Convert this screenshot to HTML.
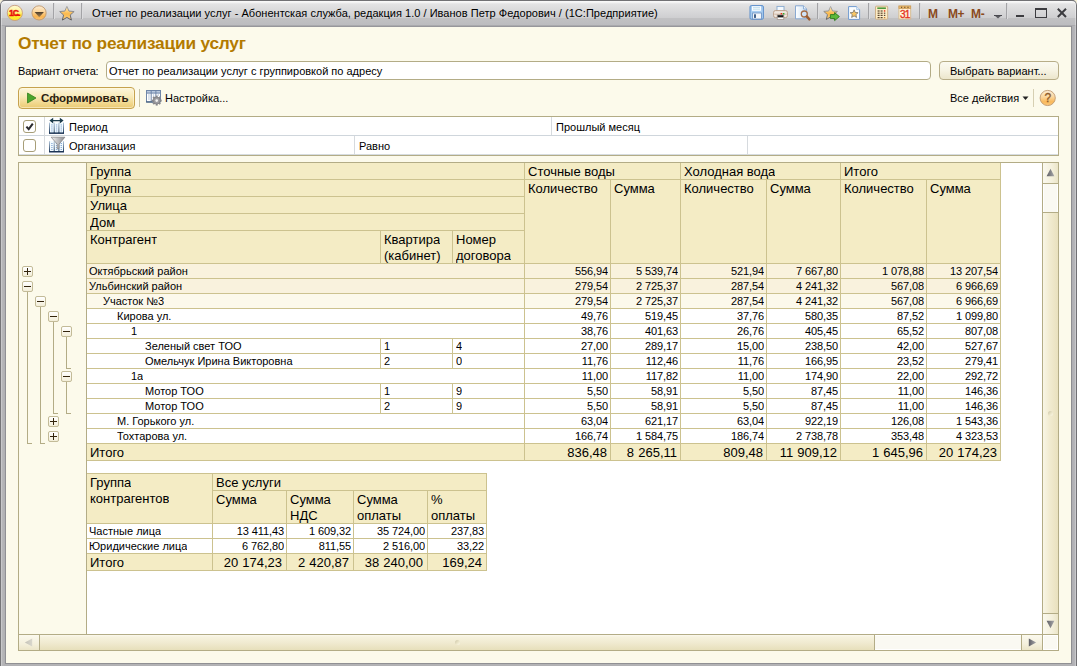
<!DOCTYPE html><html lang="ru"><head><meta charset="utf-8"><title>Отчет по реализации услуг</title><style>
html,body{margin:0;padding:0;}
body{width:1077px;height:666px;overflow:hidden;background:#f5efd5;position:relative;font-family:"Liberation Sans",sans-serif;font-size:11px;color:#000;}
div,span{box-sizing:border-box;}
.abs{position:absolute;}
#win{position:absolute;left:0;top:0;width:1077px;height:666px;border-radius:5px 5px 0 0;background:#b2b2b5;overflow:hidden;}
#tedge{position:absolute;left:0;top:0;width:1077px;height:27px;border-radius:5px 5px 0 0;border:1px solid #727275;border-bottom:none;}
#tbar{position:absolute;left:0;top:0;width:1077px;height:27px;background:linear-gradient(to bottom,#727275 0px,#727275 1px,#fbfbfb 1px,#f3f3f3 2.5px,#e3e3e4 4px,#cfcfd1 17.5px,#c1c1c3 18.5px,#bcbcbf 25px,#97979b 26px,#97979b 27px);}
#lfr{position:absolute;left:0;top:26px;width:6px;height:640px;background:linear-gradient(to right,#767678 0px,#767678 1px,#c8c8ca 1px,#c8c8ca 2px,#b8b8ba 2px,#b0b0b3 5px,#909094 5px,#909094 6px);}
#rfr{position:absolute;left:1071px;top:26px;width:6px;height:640px;background:linear-gradient(to right,#8e8e92 0px,#8e8e92 1px,#aeaeb2 1px,#b6b6ba 4px,#c8c8ca 4px,#c8c8ca 5px,#707074 5px,#707074 6px);}
#bfr{position:absolute;left:5px;top:663px;width:1067px;height:3px;background:linear-gradient(to bottom,#909094 0px,#909094 1px,#b4b4b6 1px,#b0b0b3 3px);}
#content{position:absolute;left:6px;top:27px;width:1065px;height:636px;background:#fcfaeb;}
.tsep{position:absolute;top:3px;width:2px;height:16px;background:linear-gradient(to right,#a3a3a6 0,#a3a3a6 1px,#dcdcde 1px,#dcdcde 2px);}
.ttl{position:absolute;left:92px;top:5px;height:16px;line-height:16px;font-size:11px;white-space:nowrap;color:#000;letter-spacing:0.03px;}
.h1{position:absolute;left:18px;top:32px;font-size:17.3px;font-weight:bold;color:#b37a00;line-height:22px;white-space:nowrap;letter-spacing:-0.2px;}
.ui{position:absolute;font-size:11px;line-height:14px;white-space:nowrap;}
.inp{position:absolute;left:106px;top:61px;width:825px;height:19px;border:1px solid #b3ac86;border-radius:4px;background:#fff;}
.btn{position:absolute;border:1px solid #b7ad88;border-radius:4px;background:linear-gradient(to bottom,#fbfaf1 0%,#f6f3e3 50%,#ece6cc 100%);}
.cell{position:absolute;white-space:nowrap;overflow:hidden;}
.h{font-size:13px;line-height:15px;padding-top:1px;}
.d{font-size:11px;line-height:15px;}
.num{text-align:right;letter-spacing:-0.1px;}
.h.num{letter-spacing:0;word-spacing:0.5px;}
.hl{position:absolute;height:1px;background:#ccc28f;}
.vl{position:absolute;width:1px;background:#ccc28f;}
.tb{position:absolute;width:11px;height:11px;border:1px solid #c3bb98;border-radius:2px;background:linear-gradient(to bottom,#ffffff,#f3eed8);}
.tb i{position:absolute;left:1px;top:4px;width:7px;height:1px;background:#33240c;display:block;}
.tb b{position:absolute;left:4px;top:1px;width:1px;height:7px;background:#33240c;display:block;}
.tl{position:absolute;background:#b3ac86;}
</style></head><body>
<div id="win">
<div id="tbar"></div><div id="tedge" style="box-shadow:inset 1px 0 0 rgba(255,255,255,0.35),inset -1px 0 0 rgba(255,255,255,0.35)"></div><div id="lfr"></div><div id="rfr"></div><div id="bfr"></div>
<div id="content"></div>
<svg class="abs" style="left:5px;top:3px" width="20" height="20" viewBox="0 0 20 20"><defs><linearGradient id="g1c" x1="0" y1="0" x2="0" y2="1"><stop offset="0" stop-color="#fffbd8"/><stop offset="0.45" stop-color="#fff38c"/><stop offset="0.62" stop-color="#ffee3c"/><stop offset="1" stop-color="#fde821"/></linearGradient></defs><circle cx="9.85" cy="9.9" r="7.6" fill="url(#g1c)" stroke="#c79b7e" stroke-width="0.9"/><text x="3.9" y="12.9" font-family="Liberation Sans, sans-serif" font-size="8.6" font-weight="bold" fill="#e8120c" stroke="#e8120c" stroke-width="0.45" letter-spacing="-0.9">1С</text><path d="M10.4 12.2H15.3" stroke="#e8120c" stroke-width="1.5" fill="none"/></svg>
<svg class="abs" style="left:29px;top:3px" width="20" height="20" viewBox="0 0 20 20"><defs><linearGradient id="gdd" x1="0" y1="0" x2="0" y2="1"><stop offset="0" stop-color="#fdeed6"/><stop offset="0.4" stop-color="#fbd59c"/><stop offset="0.75" stop-color="#f9b552"/><stop offset="1" stop-color="#fbc373"/></linearGradient><linearGradient id="gtr" x1="0" y1="0" x2="0" y2="1"><stop offset="0" stop-color="#4a3b2a"/><stop offset="1" stop-color="#b08a55"/></linearGradient></defs><circle cx="10.05" cy="9.9" r="7.1" fill="url(#gdd)" stroke="#c0996f" stroke-width="0.9"/><path d="M5.6 9H14.9L10.25 14.3Z" fill="url(#gtr)"/></svg>
<div class="tsep" style="left:53px"></div>
<svg class="abs" style="left:57px;top:4px" width="20" height="20" viewBox="0 0 20 20"><defs><linearGradient id="gst" x1="0" y1="0" x2="0" y2="1"><stop offset="0" stop-color="#fff0c4"/><stop offset="0.55" stop-color="#fbb94c"/><stop offset="1" stop-color="#fccf82"/></linearGradient><linearGradient id="gso" x1="0" y1="0" x2="0" y2="1"><stop offset="0" stop-color="#a9a9ab"/><stop offset="1" stop-color="#55575d"/></linearGradient></defs><path d="M9.90 2.30L11.96 7.07L17.13 7.55L13.23 10.98L14.37 16.05L9.90 13.40L5.43 16.05L6.57 10.98L2.67 7.55L7.84 7.07Z" fill="url(#gst)" stroke="url(#gso)" stroke-width="1" stroke-linejoin="round"/></svg>
<div class="tsep" style="left:81px"></div>
<div class="ttl">Отчет по реализации услуг - Абонентская служба, редакция 1.0 / Иванов Петр Федорович / (1С:Предприятие)</div>
<svg class="abs" style="left:749px;top:5px" width="16" height="16" viewBox="0 0 16 16"><rect x="1" y="0.6" width="13.4" height="13.6" rx="1.3" fill="#a9cdf0" stroke="#5d8fcb" stroke-width="1"/><rect x="3" y="1.2" width="9" height="4.6" fill="#fbfdff"/><path d="M4 2.6H11M4 4.2H11" stroke="#b5d8e8" stroke-width="0.8"/><rect x="3.6" y="8" width="8.8" height="6" fill="#f4f6f9" stroke="#6a8fc0" stroke-width="0.8"/><rect x="5" y="9.3" width="2" height="3.6" fill="#3f5f8a"/></svg>
<svg class="abs" style="left:772px;top:5px" width="17" height="16" viewBox="0 0 17 16"><rect x="5" y="1.4" width="7" height="5" fill="#f4f9fe" stroke="#86a8cf" stroke-width="0.9"/><rect x="1.6" y="5.6" width="13.8" height="7" rx="1.8" fill="#efe6de" stroke="#b89880" stroke-width="0.9"/><path d="M2.4 9.2H14.6" stroke="#c9ab94" stroke-width="0.8"/><rect x="5.2" y="10" width="6.6" height="4.6" fill="#fff" stroke="#9a8a80" stroke-width="0.7"/><rect x="5.6" y="10.2" width="5.8" height="2.2" fill="#161616"/><rect x="8.6" y="8" width="1.6" height="1.4" fill="#e8301e"/><rect x="10.8" y="8" width="1.6" height="1.4" fill="#2fae2a"/></svg>
<svg class="abs" style="left:794px;top:4px" width="18" height="18" viewBox="0 0 18 18"><defs><linearGradient id="gpg" x1="0" y1="0" x2="1" y2="0"><stop offset="0" stop-color="#ffffff"/><stop offset="1" stop-color="#c6dcf2"/></linearGradient></defs><path d="M1.5 1.8H9.5L12.6 5V14.8H1.5Z" fill="url(#gpg)" stroke="#7ea2cf" stroke-width="0.9"/><path d="M9.5 1.8V5H12.6" fill="#eef5fc" stroke="#7ea2cf" stroke-width="0.8"/><circle cx="10.3" cy="10" r="3" fill="#cfe3f8" stroke="#a36a44" stroke-width="1.3"/><path d="M12.8 12.4L15.4 15.4" stroke="#9a5b30" stroke-width="2.4" stroke-linecap="round"/></svg>
<div class="tsep" style="left:817px"></div>
<svg class="abs" style="left:822px;top:4px" width="20" height="19" viewBox="0 0 20 19"><path d="M8.60 2.40L10.54 6.93L15.45 7.38L11.74 10.62L12.83 15.42L8.60 12.90L4.37 15.42L5.46 10.62L1.75 7.38L6.66 6.93Z" fill="url(#gst)" stroke="url(#gso)" stroke-width="0.9" stroke-linejoin="round"/><path d="M8.4 10.6H12.6V8.6L17.4 12.6L12.6 16.6V14.6H8.4Z" fill="#5cb83a" stroke="#2c7a1c" stroke-width="0.9" stroke-linejoin="round"/></svg>
<svg class="abs" style="left:847px;top:5px" width="15" height="16" viewBox="0 0 15 16"><path d="M1.6 1.6H9.6L12.6 4.6V14.4H1.6Z" fill="#fbfdff" stroke="#6f9ad0" stroke-width="1"/><path d="M9.6 1.6V4.6H12.6" fill="#e4eefa" stroke="#9abbe0" stroke-width="0.7"/><path d="M7.10 4.80L8.22 7.46L11.09 7.70L8.91 9.59L9.57 12.40L7.10 10.90L4.63 12.40L5.29 9.59L3.11 7.70L5.98 7.46Z" fill="#fbc866" stroke="#77736a" stroke-width="0.8" stroke-linejoin="round"/></svg>
<div class="tsep" style="left:868px"></div>
<svg class="abs" style="left:875px;top:5px" width="14" height="16" viewBox="0 0 14 16"><rect x="0.5" y="1.2" width="12.2" height="13" rx="0.8" fill="#fdecc6" stroke="#c9ab80" stroke-width="0.9"/><rect x="2.3" y="2.4" width="8.6" height="1.6" fill="#4d9a3c"/><g fill="#5a4630"><rect x="2.6" y="5.4" width="2" height="1.2"/><rect x="5.6" y="5.4" width="2" height="1.2"/><rect x="2.6" y="7.6" width="2" height="1.2"/><rect x="5.6" y="7.6" width="2" height="1.2"/><rect x="8.9" y="7.6" width="1.4" height="1.2"/><rect x="2.6" y="9.8" width="2" height="1.2"/><rect x="5.6" y="9.8" width="2" height="1.2"/><rect x="8.9" y="9.8" width="1.4" height="1.2"/><rect x="2.6" y="12" width="2" height="1.2"/><rect x="5.6" y="12" width="2" height="1.2"/></g><rect x="8.9" y="5.2" width="1.4" height="1.5" fill="#e43a1e"/><rect x="8.9" y="12" width="1.4" height="1.2" fill="#c9862e"/></svg>
<svg class="abs" style="left:898px;top:5px" width="14" height="16" viewBox="0 0 14 16"><rect x="0.9" y="1" width="11.8" height="13" fill="#fff3dc" stroke="#d5b88c" stroke-width="0.9"/><rect x="0.9" y="1" width="11.8" height="2.6" fill="#eab96c" stroke="#c99a58" stroke-width="0.7"/><g fill="#5a4026"><rect x="3" y="1.8" width="1.2" height="1"/><rect x="6.2" y="1.8" width="1.2" height="1"/><rect x="9.4" y="1.8" width="1.2" height="1"/></g><text x="1.9" y="12.7" font-family="Liberation Sans, sans-serif" font-size="10" fill="#e4321c" stroke="#e4321c" stroke-width="0.35" letter-spacing="-0.7">31</text></svg>
<div class="tsep" style="left:919px"></div>
<div class="abs" style="left:928px;top:5px;font-size:12px;line-height:16px;font-weight:bold;color:#8a4a1c;white-space:nowrap;letter-spacing:-0.2px;transform:translateY(0.3px) scale(1,1.09);transform-origin:0 50%">M</div>
<div class="abs" style="left:948px;top:5px;font-size:12px;line-height:16px;font-weight:bold;color:#8a4a1c;white-space:nowrap;letter-spacing:-0.6px;transform:translateY(0.3px) scale(1,1.09);transform-origin:0 50%">M+</div>
<div class="abs" style="left:971px;top:5px;font-size:12px;line-height:16px;font-weight:bold;color:#8a4a1c;white-space:nowrap;letter-spacing:-0.3px;transform:translateY(0.3px) scale(1,1.09);transform-origin:0 50%">M-</div>
<svg class="abs" style="left:993px;top:12px" width="10" height="8" viewBox="0 0 10 8"><path d="M1 3H9L5 6.6Z" fill="#5a5a5f"/><path d="M1 3.5H9" stroke="#4a4a50" stroke-width="1"/></svg>
<div class="tsep" style="left:1006px"></div>
<div class="abs" style="left:1016px;top:15px;width:8px;height:2px;background:#3c3c40"></div>
<div class="abs" style="left:1035px;top:8px;width:12px;height:10px;border:1px solid #3c3c40;border-top-width:2px"></div>
<svg class="abs" style="left:1056px;top:7px" width="12" height="12" viewBox="0 0 12 12"><path d="M1.8 1.8L10 10M10 1.8L1.8 10" stroke="#3c3c40" stroke-width="2"/></svg>
<div class="h1">Отчет по реализации услуг</div>
<div class="ui" style="left:18px;top:64px;letter-spacing:-0.13px">Вариант отчета:</div>
<div class="inp"></div>
<div class="ui" style="left:109px;top:64px">Отчет по реализации услуг с группировкой по адресу</div>
<div class="btn" style="left:939px;top:61px;width:120px;height:19px"></div>
<div class="ui" style="left:950px;top:64px">Выбрать вариант...</div>
<div class="btn" style="left:18px;top:87px;width:117px;height:22px;border-color:#c6a24e;border-radius:4px;background:linear-gradient(to bottom,#fdf6dc 0%,#f9ebba 40%,#f1d88f 75%,#ebca72 100%);box-shadow:inset 0 0 0 1px rgba(255,250,225,0.55)"></div>
<svg class="abs" style="left:26px;top:92px" width="11" height="12" viewBox="0 0 11 12"><path d="M1.5 1L10 6L1.5 11Z" fill="#4aa52c" stroke="#35801e" stroke-width="0.8"/></svg>
<div class="ui" style="left:41px;top:91px;font-weight:bold;font-size:11.5px;color:#2a2010">Сформировать</div>
<div class="abs" style="left:139px;top:89px;width:1px;height:18px;background:#c9c3a3"></div>
<svg class="abs" style="left:145px;top:89px" width="18" height="18" viewBox="0 0 18 18"><rect x="1.5" y="1.5" width="14" height="11.4" fill="#fff" stroke="#6f86a8"/><rect x="1.5" y="1.5" width="14" height="2.6" fill="#b9c9df" stroke="#6f86a8"/><path d="M6.2 1.5V12.9M10.9 1.5V12.9" stroke="#6f86a8"/><path d="M3.3 6H4.6M3.3 8H4.6M3.3 10H4.6M7.9 6H9.2M7.9 8H9.2M12.6 6H13.9" stroke="#9ab0cc" stroke-width="1"/><path d="M1.2 13H8" stroke="#26466a" stroke-width="1.2"/><g transform="translate(11.7 11.6)"><g fill="#8a8a8e"><rect x="-1" y="-5" width="2" height="10"/><rect x="-1" y="-5" width="2" height="10" transform="rotate(45)"/><rect x="-1" y="-5" width="2" height="10" transform="rotate(90)"/><rect x="-1" y="-5" width="2" height="10" transform="rotate(135)"/></g><circle r="3.5" fill="#9c9ca0" stroke="#77777b" stroke-width="0.6"/><circle r="1.3" fill="#f4f4f2"/></g></svg>
<div class="ui" style="left:165px;top:91px">Настройка...</div>
<div class="ui" style="left:950px;top:91px">Все действия</div>
<svg class="abs" style="left:1022px;top:96px" width="7" height="5" viewBox="0 0 7 5"><path d="M0.5 0.5H6.5L3.5 4Z" fill="#222"/></svg>
<div class="abs" style="left:1033px;top:89px;width:1px;height:18px;background:#d6cfb2"></div>
<svg class="abs" style="left:1038px;top:88px" width="20" height="20" viewBox="0 0 20 20"><defs><linearGradient id="ghl" x1="0" y1="0" x2="0" y2="1"><stop offset="0" stop-color="#fdeed6"/><stop offset="0.4" stop-color="#fbd8a2"/><stop offset="0.75" stop-color="#f9b95c"/><stop offset="1" stop-color="#fbc67a"/></linearGradient></defs><circle cx="9.7" cy="10" r="7.6" fill="url(#ghl)" stroke="#c0996f" stroke-width="0.9"/><text x="9.8" y="14" text-anchor="middle" font-family="Liberation Sans, sans-serif" font-size="12" fill="#8d5a2a" stroke="#8d5a2a" stroke-width="0.3">?</text></svg>
<div class="abs" style="left:18px;top:116px;width:1041px;height:40px;border:1px solid #b3ac86;background:#fff"></div>
<div class="abs" style="left:19px;top:135px;width:1039px;height:1px;background:#cfd6dc"></div>
<div class="abs" style="left:19px;top:154px;width:1039px;height:1px;background:#d6dce0"></div>
<div class="abs" style="left:44px;top:117px;width:1px;height:38px;background:#d6dade"></div>
<div class="abs" style="left:551px;top:117px;width:1px;height:18px;background:#d6dade"></div>
<div class="abs" style="left:354px;top:136px;width:1px;height:19px;background:#d6dade"></div>
<div class="abs" style="left:747px;top:136px;width:1px;height:19px;background:#d6dade"></div>
<div class="abs" style="left:23px;top:120px;width:13px;height:13px;border:1px solid #a79e78;border-radius:3px;background:#fff"></div>
<svg class="abs" style="left:25px;top:122px" width="10" height="9" viewBox="0 0 10 9"><path d="M1.4 4.6L3.7 7.1L7.8 1.6" fill="none" stroke="#2a2a2e" stroke-width="2" stroke-linejoin="miter"/></svg>
<div class="abs" style="left:23px;top:139px;width:13px;height:13px;border:1px solid #a79e78;border-radius:3px;background:#fff"></div>
<svg class="abs" style="left:48px;top:117px" width="17" height="18" viewBox="0 0 17 18"><defs><linearGradient id="gtb" x1="0" y1="0" x2="0" y2="1"><stop offset="0" stop-color="#b4c8dc"/><stop offset="1" stop-color="#1e3a5c"/></linearGradient><linearGradient id="gfn" x1="0" y1="0" x2="1" y2="0"><stop offset="0" stop-color="#f4f4f4"/><stop offset="0.55" stop-color="#b9b9bb"/><stop offset="1" stop-color="#8a8a8e"/></linearGradient></defs><rect x="1.5" y="5.6" width="14" height="10.6" fill="#f2fbff"/><rect x="1.0" y="5.6" width="1" height="10.6" fill="url(#gtb)"/><rect x="5.7" y="5.6" width="1" height="10.6" fill="url(#gtb)"/><rect x="10.4" y="5.6" width="1" height="10.6" fill="url(#gtb)"/><rect x="15.0" y="5.6" width="1" height="10.6" fill="url(#gtb)"/><rect x="1" y="15.4" width="15" height="1.5" fill="#1c3556"/><rect x="3.2" y="7.5" width="1.4" height="0.9" fill="#7fa4d4"/><rect x="3.2" y="9.5" width="1.4" height="0.9" fill="#7fa4d4"/><rect x="3.2" y="11.5" width="1.4" height="0.9" fill="#7fa4d4"/><rect x="3.2" y="13.5" width="1.4" height="0.9" fill="#7fa4d4"/><rect x="7.8999999999999995" y="7.5" width="1.4" height="0.9" fill="#7fa4d4"/><rect x="7.8999999999999995" y="9.5" width="1.4" height="0.9" fill="#7fa4d4"/><rect x="7.8999999999999995" y="11.5" width="1.4" height="0.9" fill="#7fa4d4"/><rect x="7.8999999999999995" y="13.5" width="1.4" height="0.9" fill="#7fa4d4"/><rect x="12.600000000000001" y="7.5" width="1.4" height="0.9" fill="#7fa4d4"/><rect x="12.600000000000001" y="9.5" width="1.4" height="0.9" fill="#7fa4d4"/><rect x="12.600000000000001" y="11.5" width="1.4" height="0.9" fill="#7fa4d4"/><rect x="12.600000000000001" y="13.5" width="1.4" height="0.9" fill="#7fa4d4"/><path d="M3 3.6H14" stroke="#1c3c4c" stroke-width="1.3"/><path d="M1.4 3.6L5.2 0.8V6.4ZM15.6 3.6L11.8 0.8V6.4Z" fill="#1c3c4c"/></svg>
<svg class="abs" style="left:48px;top:136px" width="18" height="18" viewBox="0 0 18 18"><rect x="1.5" y="5.2" width="14" height="10.6" fill="#f2fbff"/><rect x="1.0" y="5.2" width="1" height="10.6" fill="url(#gtb)"/><rect x="5.7" y="5.2" width="1" height="10.6" fill="url(#gtb)"/><rect x="10.4" y="5.2" width="1" height="10.6" fill="url(#gtb)"/><rect x="15.0" y="5.2" width="1" height="10.6" fill="url(#gtb)"/><rect x="1" y="15.0" width="15" height="1.5" fill="#1c3556"/><rect x="3.2" y="7.1" width="1.4" height="0.9" fill="#7fa4d4"/><rect x="3.2" y="9.1" width="1.4" height="0.9" fill="#7fa4d4"/><rect x="3.2" y="11.1" width="1.4" height="0.9" fill="#7fa4d4"/><rect x="3.2" y="13.1" width="1.4" height="0.9" fill="#7fa4d4"/><rect x="7.8999999999999995" y="7.1" width="1.4" height="0.9" fill="#7fa4d4"/><rect x="7.8999999999999995" y="9.1" width="1.4" height="0.9" fill="#7fa4d4"/><rect x="7.8999999999999995" y="11.1" width="1.4" height="0.9" fill="#7fa4d4"/><rect x="7.8999999999999995" y="13.1" width="1.4" height="0.9" fill="#7fa4d4"/><rect x="12.600000000000001" y="7.1" width="1.4" height="0.9" fill="#7fa4d4"/><rect x="12.600000000000001" y="9.1" width="1.4" height="0.9" fill="#7fa4d4"/><rect x="12.600000000000001" y="11.1" width="1.4" height="0.9" fill="#7fa4d4"/><rect x="12.600000000000001" y="13.1" width="1.4" height="0.9" fill="#7fa4d4"/><path d="M3.2 1.2H16.9L11 8.2V12.2L9.2 13V8.2Z" fill="url(#gfn)" stroke="#7c7c80" stroke-width="0.7" stroke-linejoin="round"/></svg>
<div class="ui" style="left:69px;top:120px">Период</div>
<div class="ui" style="left:556px;top:120px">Прошлый месяц</div>
<div class="ui" style="left:69px;top:139px">Организация</div>
<div class="ui" style="left:359px;top:139px">Равно</div>
<div class="abs" style="left:18px;top:162px;width:1041px;height:489px;border:1px solid #b3ac86;background:#fff"></div>
<div class="abs" style="left:19px;top:163px;width:67px;height:471px;background:#fcfaeb"></div>
<div class="abs" style="left:86px;top:163px;width:1px;height:471px;background:#b3ac86"></div>
<div class="abs" style="left:87px;top:163px;width:914px;height:101px;background:#f4ecc5"></div>
<div class="hl" style="left:87px;top:179px;width:914px"></div>
<div class="hl" style="left:87px;top:196px;width:438px"></div>
<div class="hl" style="left:87px;top:213px;width:438px"></div>
<div class="hl" style="left:87px;top:230px;width:438px"></div>
<div class="hl" style="left:87px;top:263px;width:914px"></div>
<div class="vl" style="left:524px;top:163px;height:101px"></div>
<div class="vl" style="left:680px;top:163px;height:101px"></div>
<div class="vl" style="left:840px;top:163px;height:101px"></div>
<div class="vl" style="left:1000px;top:163px;height:101px"></div>
<div class="vl" style="left:610px;top:180px;height:84px"></div>
<div class="vl" style="left:766px;top:180px;height:84px"></div>
<div class="vl" style="left:926px;top:180px;height:84px"></div>
<div class="vl" style="left:380px;top:231px;height:33px"></div>
<div class="vl" style="left:452px;top:231px;height:33px"></div>
<div class="cell h" style="left:90px;top:163px">Группа</div>
<div class="cell h" style="left:90px;top:180px">Группа</div>
<div class="cell h" style="left:90px;top:197px">Улица</div>
<div class="cell h" style="left:90px;top:214px">Дом</div>
<div class="cell h" style="left:90px;top:231px">Контрагент</div>
<div class="cell h" style="left:384px;top:231px">Квартира</div>
<div class="cell h" style="left:384px;top:247px">(кабинет)</div>
<div class="cell h" style="left:456px;top:231px">Номер</div>
<div class="cell h" style="left:456px;top:247px">договора</div>
<div class="cell h" style="left:528px;top:163px">Сточные воды</div>
<div class="cell h" style="left:684px;top:163px">Холодная вода</div>
<div class="cell h" style="left:844px;top:163px">Итого</div>
<div class="cell h" style="left:528px;top:180px">Количество</div>
<div class="cell h" style="left:684px;top:180px">Количество</div>
<div class="cell h" style="left:844px;top:180px">Количество</div>
<div class="cell h" style="left:614px;top:180px">Сумма</div>
<div class="cell h" style="left:770px;top:180px">Сумма</div>
<div class="cell h" style="left:930px;top:180px">Сумма</div>
<div class="abs" style="left:87px;top:264px;width:914px;height:14px;background:#f9f2dd"></div>
<div class="hl" style="left:87px;top:278px;width:914px"></div>
<div class="cell d" style="left:89px;top:264px">Октябрьский район</div>
<div class="cell d num" style="left:525px;top:264px;width:83px">556,94</div>
<div class="cell d num" style="left:611px;top:264px;width:67px">5 539,74</div>
<div class="cell d num" style="left:681px;top:264px;width:83px">521,94</div>
<div class="cell d num" style="left:767px;top:264px;width:71px">7 667,80</div>
<div class="cell d num" style="left:841px;top:264px;width:83px">1 078,88</div>
<div class="cell d num" style="left:927px;top:264px;width:71px">13 207,54</div>
<div class="abs" style="left:87px;top:279px;width:914px;height:14px;background:#f9f2dd"></div>
<div class="hl" style="left:87px;top:293px;width:914px"></div>
<div class="cell d" style="left:89px;top:279px">Ульбинский район</div>
<div class="cell d num" style="left:525px;top:279px;width:83px">279,54</div>
<div class="cell d num" style="left:611px;top:279px;width:67px">2 725,37</div>
<div class="cell d num" style="left:681px;top:279px;width:83px">287,54</div>
<div class="cell d num" style="left:767px;top:279px;width:71px">4 241,32</div>
<div class="cell d num" style="left:841px;top:279px;width:83px">567,08</div>
<div class="cell d num" style="left:927px;top:279px;width:71px">6 966,69</div>
<div class="abs" style="left:87px;top:294px;width:914px;height:14px;background:#fcf9eb"></div>
<div class="hl" style="left:87px;top:308px;width:914px"></div>
<div class="cell d" style="left:103px;top:294px">Участок №3</div>
<div class="cell d num" style="left:525px;top:294px;width:83px">279,54</div>
<div class="cell d num" style="left:611px;top:294px;width:67px">2 725,37</div>
<div class="cell d num" style="left:681px;top:294px;width:83px">287,54</div>
<div class="cell d num" style="left:767px;top:294px;width:71px">4 241,32</div>
<div class="cell d num" style="left:841px;top:294px;width:83px">567,08</div>
<div class="cell d num" style="left:927px;top:294px;width:71px">6 966,69</div>
<div class="abs" style="left:87px;top:309px;width:914px;height:14px;background:#fff"></div>
<div class="hl" style="left:87px;top:323px;width:914px"></div>
<div class="cell d" style="left:117px;top:309px">Кирова ул.</div>
<div class="cell d num" style="left:525px;top:309px;width:83px">49,76</div>
<div class="cell d num" style="left:611px;top:309px;width:67px">519,45</div>
<div class="cell d num" style="left:681px;top:309px;width:83px">37,76</div>
<div class="cell d num" style="left:767px;top:309px;width:71px">580,35</div>
<div class="cell d num" style="left:841px;top:309px;width:83px">87,52</div>
<div class="cell d num" style="left:927px;top:309px;width:71px">1 099,80</div>
<div class="abs" style="left:87px;top:324px;width:914px;height:14px;background:#fff"></div>
<div class="hl" style="left:87px;top:338px;width:914px"></div>
<div class="cell d" style="left:131px;top:324px">1</div>
<div class="cell d num" style="left:525px;top:324px;width:83px">38,76</div>
<div class="cell d num" style="left:611px;top:324px;width:67px">401,63</div>
<div class="cell d num" style="left:681px;top:324px;width:83px">26,76</div>
<div class="cell d num" style="left:767px;top:324px;width:71px">405,45</div>
<div class="cell d num" style="left:841px;top:324px;width:83px">65,52</div>
<div class="cell d num" style="left:927px;top:324px;width:71px">807,08</div>
<div class="abs" style="left:87px;top:339px;width:914px;height:14px;background:#fff"></div>
<div class="hl" style="left:87px;top:353px;width:914px"></div>
<div class="cell d" style="left:145px;top:339px">Зеленый свет ТОО</div>
<div class="vl" style="left:380px;top:339px;height:15px"></div>
<div class="vl" style="left:452px;top:339px;height:15px"></div>
<div class="cell d" style="left:384px;top:339px">1</div>
<div class="cell d" style="left:456px;top:339px">4</div>
<div class="cell d num" style="left:525px;top:339px;width:83px">27,00</div>
<div class="cell d num" style="left:611px;top:339px;width:67px">289,17</div>
<div class="cell d num" style="left:681px;top:339px;width:83px">15,00</div>
<div class="cell d num" style="left:767px;top:339px;width:71px">238,50</div>
<div class="cell d num" style="left:841px;top:339px;width:83px">42,00</div>
<div class="cell d num" style="left:927px;top:339px;width:71px">527,67</div>
<div class="abs" style="left:87px;top:354px;width:914px;height:14px;background:#fff"></div>
<div class="hl" style="left:87px;top:368px;width:914px"></div>
<div class="cell d" style="left:145px;top:354px">Омельчук Ирина Викторовна</div>
<div class="vl" style="left:380px;top:354px;height:15px"></div>
<div class="vl" style="left:452px;top:354px;height:15px"></div>
<div class="cell d" style="left:384px;top:354px">2</div>
<div class="cell d" style="left:456px;top:354px">0</div>
<div class="cell d num" style="left:525px;top:354px;width:83px">11,76</div>
<div class="cell d num" style="left:611px;top:354px;width:67px">112,46</div>
<div class="cell d num" style="left:681px;top:354px;width:83px">11,76</div>
<div class="cell d num" style="left:767px;top:354px;width:71px">166,95</div>
<div class="cell d num" style="left:841px;top:354px;width:83px">23,52</div>
<div class="cell d num" style="left:927px;top:354px;width:71px">279,41</div>
<div class="abs" style="left:87px;top:369px;width:914px;height:14px;background:#fff"></div>
<div class="hl" style="left:87px;top:383px;width:914px"></div>
<div class="cell d" style="left:131px;top:369px">1а</div>
<div class="cell d num" style="left:525px;top:369px;width:83px">11,00</div>
<div class="cell d num" style="left:611px;top:369px;width:67px">117,82</div>
<div class="cell d num" style="left:681px;top:369px;width:83px">11,00</div>
<div class="cell d num" style="left:767px;top:369px;width:71px">174,90</div>
<div class="cell d num" style="left:841px;top:369px;width:83px">22,00</div>
<div class="cell d num" style="left:927px;top:369px;width:71px">292,72</div>
<div class="abs" style="left:87px;top:384px;width:914px;height:14px;background:#fff"></div>
<div class="hl" style="left:87px;top:398px;width:914px"></div>
<div class="cell d" style="left:145px;top:384px">Мотор ТОО</div>
<div class="vl" style="left:380px;top:384px;height:15px"></div>
<div class="vl" style="left:452px;top:384px;height:15px"></div>
<div class="cell d" style="left:384px;top:384px">1</div>
<div class="cell d" style="left:456px;top:384px">9</div>
<div class="cell d num" style="left:525px;top:384px;width:83px">5,50</div>
<div class="cell d num" style="left:611px;top:384px;width:67px">58,91</div>
<div class="cell d num" style="left:681px;top:384px;width:83px">5,50</div>
<div class="cell d num" style="left:767px;top:384px;width:71px">87,45</div>
<div class="cell d num" style="left:841px;top:384px;width:83px">11,00</div>
<div class="cell d num" style="left:927px;top:384px;width:71px">146,36</div>
<div class="abs" style="left:87px;top:399px;width:914px;height:14px;background:#fff"></div>
<div class="hl" style="left:87px;top:413px;width:914px"></div>
<div class="cell d" style="left:145px;top:399px">Мотор ТОО</div>
<div class="vl" style="left:380px;top:399px;height:15px"></div>
<div class="vl" style="left:452px;top:399px;height:15px"></div>
<div class="cell d" style="left:384px;top:399px">2</div>
<div class="cell d" style="left:456px;top:399px">9</div>
<div class="cell d num" style="left:525px;top:399px;width:83px">5,50</div>
<div class="cell d num" style="left:611px;top:399px;width:67px">58,91</div>
<div class="cell d num" style="left:681px;top:399px;width:83px">5,50</div>
<div class="cell d num" style="left:767px;top:399px;width:71px">87,45</div>
<div class="cell d num" style="left:841px;top:399px;width:83px">11,00</div>
<div class="cell d num" style="left:927px;top:399px;width:71px">146,36</div>
<div class="abs" style="left:87px;top:414px;width:914px;height:14px;background:#fff"></div>
<div class="hl" style="left:87px;top:428px;width:914px"></div>
<div class="cell d" style="left:117px;top:414px">М. Горького ул.</div>
<div class="cell d num" style="left:525px;top:414px;width:83px">63,04</div>
<div class="cell d num" style="left:611px;top:414px;width:67px">621,17</div>
<div class="cell d num" style="left:681px;top:414px;width:83px">63,04</div>
<div class="cell d num" style="left:767px;top:414px;width:71px">922,19</div>
<div class="cell d num" style="left:841px;top:414px;width:83px">126,08</div>
<div class="cell d num" style="left:927px;top:414px;width:71px">1 543,36</div>
<div class="abs" style="left:87px;top:429px;width:914px;height:14px;background:#fff"></div>
<div class="hl" style="left:87px;top:443px;width:914px"></div>
<div class="cell d" style="left:117px;top:429px">Тохтарова ул.</div>
<div class="cell d num" style="left:525px;top:429px;width:83px">166,74</div>
<div class="cell d num" style="left:611px;top:429px;width:67px">1 584,75</div>
<div class="cell d num" style="left:681px;top:429px;width:83px">186,74</div>
<div class="cell d num" style="left:767px;top:429px;width:71px">2 738,78</div>
<div class="cell d num" style="left:841px;top:429px;width:83px">353,48</div>
<div class="cell d num" style="left:927px;top:429px;width:71px">4 323,53</div>
<div class="vl" style="left:524px;top:264px;height:180px"></div>
<div class="vl" style="left:610px;top:264px;height:180px"></div>
<div class="vl" style="left:680px;top:264px;height:180px"></div>
<div class="vl" style="left:766px;top:264px;height:180px"></div>
<div class="vl" style="left:840px;top:264px;height:180px"></div>
<div class="vl" style="left:926px;top:264px;height:180px"></div>
<div class="vl" style="left:1000px;top:264px;height:180px"></div>
<div class="abs" style="left:87px;top:444px;width:914px;height:16px;background:#f4ecc5"></div>
<div class="hl" style="left:87px;top:460px;width:914px"></div>
<div class="vl" style="left:524px;top:444px;height:17px"></div>
<div class="vl" style="left:610px;top:444px;height:17px"></div>
<div class="vl" style="left:680px;top:444px;height:17px"></div>
<div class="vl" style="left:766px;top:444px;height:17px"></div>
<div class="vl" style="left:840px;top:444px;height:17px"></div>
<div class="vl" style="left:926px;top:444px;height:17px"></div>
<div class="vl" style="left:1000px;top:444px;height:17px"></div>
<div class="cell h" style="left:90px;top:444px">Итого</div>
<div class="cell h num" style="left:525px;top:444px;width:82px">836,48</div>
<div class="cell h num" style="left:611px;top:444px;width:66px">8 265,11</div>
<div class="cell h num" style="left:681px;top:444px;width:82px">809,48</div>
<div class="cell h num" style="left:767px;top:444px;width:70px">11 909,12</div>
<div class="cell h num" style="left:841px;top:444px;width:82px">1 645,96</div>
<div class="cell h num" style="left:927px;top:444px;width:70px">20 174,23</div>
<div class="tl" style="left:27px;top:292px;width:1px;height:152px"></div>
<div class="tl" style="left:27px;top:443px;width:5px;height:1px"></div>
<div class="tl" style="left:40px;top:307px;width:1px;height:137px"></div>
<div class="tl" style="left:40px;top:443px;width:5px;height:1px"></div>
<div class="tl" style="left:53px;top:322px;width:1px;height:92px"></div>
<div class="tl" style="left:53px;top:413px;width:5px;height:1px"></div>
<div class="tl" style="left:66px;top:337px;width:1px;height:32px"></div>
<div class="tl" style="left:66px;top:368px;width:5px;height:1px"></div>
<div class="tl" style="left:66px;top:382px;width:1px;height:32px"></div>
<div class="tl" style="left:66px;top:413px;width:5px;height:1px"></div>
<div class="tb" style="left:22px;top:266px"><i></i><b></b></div>
<div class="tb" style="left:22px;top:281px"><i></i></div>
<div class="tb" style="left:35px;top:296px"><i></i></div>
<div class="tb" style="left:48px;top:311px"><i></i></div>
<div class="tb" style="left:61px;top:326px"><i></i></div>
<div class="tb" style="left:61px;top:371px"><i></i></div>
<div class="tb" style="left:48px;top:416px"><i></i><b></b></div>
<div class="tb" style="left:48px;top:431px"><i></i><b></b></div>
<div class="abs" style="left:87px;top:474px;width:399px;height:49px;background:#f4ecc5"></div>
<div class="hl" style="left:87px;top:473px;width:400px"></div>
<div class="hl" style="left:213px;top:490px;width:273px"></div>
<div class="hl" style="left:87px;top:523px;width:399px"></div>
<div class="vl" style="left:212px;top:474px;height:50px"></div>
<div class="vl" style="left:486px;top:474px;height:50px"></div>
<div class="vl" style="left:286px;top:491px;height:33px"></div>
<div class="vl" style="left:353px;top:491px;height:33px"></div>
<div class="vl" style="left:427px;top:491px;height:33px"></div>
<div class="cell h" style="left:90px;top:474px">Группа</div>
<div class="cell h" style="left:90px;top:490px">контрагентов</div>
<div class="cell h" style="left:216px;top:474px">Все услуги</div>
<div class="cell h" style="left:216px;top:491px">Сумма</div>
<div class="cell h" style="left:290px;top:491px">Сумма</div><div class="cell h" style="left:290px;top:507px">НДС</div>
<div class="cell h" style="left:357px;top:491px">Сумма</div><div class="cell h" style="left:357px;top:507px">оплаты</div>
<div class="cell h" style="left:431px;top:491px">%</div><div class="cell h" style="left:431px;top:507px">оплаты</div>
<div class="hl" style="left:87px;top:538px;width:399px"></div>
<div class="cell d" style="left:89px;top:524px">Частные лица</div>
<div class="cell d num" style="left:213px;top:524px;width:71px">13 411,43</div>
<div class="cell d num" style="left:287px;top:524px;width:64px">1 609,32</div>
<div class="cell d num" style="left:354px;top:524px;width:71px">35 724,00</div>
<div class="cell d num" style="left:428px;top:524px;width:56px">237,83</div>
<div class="hl" style="left:87px;top:553px;width:399px"></div>
<div class="cell d" style="left:89px;top:539px">Юридические лица</div>
<div class="cell d num" style="left:213px;top:539px;width:71px">6 762,80</div>
<div class="cell d num" style="left:287px;top:539px;width:64px">811,55</div>
<div class="cell d num" style="left:354px;top:539px;width:71px">2 516,00</div>
<div class="cell d num" style="left:428px;top:539px;width:56px">33,22</div>
<div class="vl" style="left:212px;top:524px;height:30px"></div>
<div class="vl" style="left:286px;top:524px;height:30px"></div>
<div class="vl" style="left:353px;top:524px;height:30px"></div>
<div class="vl" style="left:427px;top:524px;height:30px"></div>
<div class="vl" style="left:486px;top:524px;height:30px"></div>
<div class="abs" style="left:87px;top:554px;width:399px;height:16px;background:#f4ecc5"></div>
<div class="hl" style="left:87px;top:570px;width:400px"></div>
<div class="vl" style="left:212px;top:554px;height:17px"></div>
<div class="vl" style="left:286px;top:554px;height:17px"></div>
<div class="vl" style="left:353px;top:554px;height:17px"></div>
<div class="vl" style="left:427px;top:554px;height:17px"></div>
<div class="vl" style="left:486px;top:554px;height:17px"></div>
<div class="cell h" style="left:90px;top:554px">Итого</div>
<div class="cell h num" style="left:213px;top:554px;width:69px">20 174,23</div>
<div class="cell h num" style="left:287px;top:554px;width:62px">2 420,87</div>
<div class="cell h num" style="left:354px;top:554px;width:69px">38 240,00</div>
<div class="cell h num" style="left:428px;top:554px;width:54px">169,24</div>
<svg width="0" height="0" style="position:absolute"><defs><linearGradient id="gar" x1="0" y1="0" x2="1" y2="0"><stop offset="0" stop-color="#5e5e64"/><stop offset="1" stop-color="#a9a9ab"/></linearGradient><linearGradient id="garl" x1="0" y1="0" x2="1" y2="0"><stop offset="0" stop-color="#c4c2b8"/><stop offset="1" stop-color="#d9d7cc"/></linearGradient></defs></svg>
<div class="abs" style="left:1042px;top:163px;width:1px;height:471px;background:#b3ac86"></div>
<div class="abs" style="left:1043px;top:163px;width:15px;height:471px;background:#faf9f2;box-shadow:inset 0 0 0 1px #fff"></div>
<div class="abs" style="left:1043px;top:163px;width:15px;height:21px;background:linear-gradient(to right,#fbf9ee 0%,#f4f0dc 60%,#ebe5c8 100%);border-bottom:1px solid #b3ac86"></div>
<svg class="abs" style="left:1046px;top:168px" width="9" height="9" viewBox="0 0 9 9"><path d="M4.5 0.8L8.4 8.2H0.6Z" fill="url(#gar)"/></svg>
<div class="abs" style="left:1043px;top:212px;width:15px;height:402px;border-top:1px solid #b3ac86;border-bottom:1px solid #b3ac86;background:linear-gradient(to right,#f9f6e6 0%,#f1ebd0 45%,#e9e1be 100%)"></div>
<div class="abs" style="left:1043px;top:614px;width:15px;height:20px;background:linear-gradient(to right,#fbf9ee 0%,#f4f0dc 60%,#ebe5c8 100%)"></div>
<svg class="abs" style="left:1046px;top:620px" width="9" height="9" viewBox="0 0 9 9"><path d="M0.6 0.8H8.4L4.5 8.2Z" fill="url(#gar)"/></svg>
<div class="abs" style="left:1048px;top:411px;width:5px;height:5px;border-radius:50%;background:linear-gradient(135deg,#cbc5a8 0%,#ece6ca 55%,#fbf8e8 100%)"></div>
<div class="abs" style="left:19px;top:634px;width:1039px;height:1px;background:#b3ac86"></div>
<div class="abs" style="left:19px;top:635px;width:1023px;height:15px;background:#faf9f2;box-shadow:inset 0 0 0 1px #fff"></div>
<div class="abs" style="left:1043px;top:635px;width:15px;height:15px;background:#faf9f2;box-shadow:inset 0 0 0 1px #fff"></div>
<div class="abs" style="left:19px;top:635px;width:21px;height:15px;background:linear-gradient(to bottom,#fbf9ee 0%,#f4f0dc 60%,#ebe5c8 100%);border-right:1px solid #b3ac86"></div>
<svg class="abs" style="left:24px;top:638px" width="9" height="9" viewBox="0 0 9 9"><path d="M0.8 4.5L8.2 0.6V8.4Z" fill="url(#garl)"/></svg>
<div class="abs" style="left:40px;top:635px;width:835px;height:15px;border-right:1px solid #b3ac86;background:linear-gradient(to bottom,#fbf9ee 0px,#f6f2de 2px,#f0ead0 8px,#e7dfbb 15px)"></div>
<div class="abs" style="left:455px;top:640px;width:5px;height:5px;border-radius:50%;background:linear-gradient(135deg,#cbc5a8 0%,#ece6ca 55%,#fbf8e8 100%)"></div>
<div class="abs" style="left:1021px;top:635px;width:21px;height:15px;background:linear-gradient(to bottom,#fbf9ee 0%,#f4f0dc 60%,#ebe5c8 100%);border-left:1px solid #b3ac86"></div>
<svg class="abs" style="left:1028px;top:638px" width="9" height="9" viewBox="0 0 9 9"><path d="M0.8 0.6L8.2 4.5L0.8 8.4Z" fill="url(#gar)"/></svg>
<div class="abs" style="left:1042px;top:635px;width:1px;height:15px;background:#b3ac86"></div>
</div></body></html>
